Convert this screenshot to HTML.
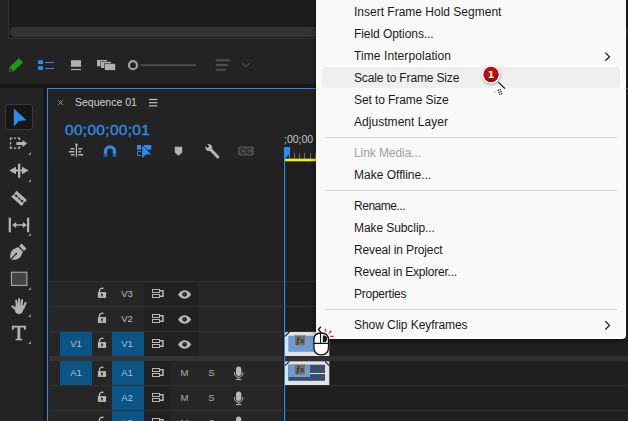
<!DOCTYPE html>
<html><head><meta charset="utf-8">
<style>
*{margin:0;padding:0;box-sizing:border-box}
html,body{width:628px;height:421px;overflow:hidden;background:#232323}
body{position:relative;font-family:"Liberation Sans",sans-serif;color:#bdbdbd}
.a{position:absolute}
.mi{position:absolute;left:354px;font-size:12px;color:#1b1b1b;white-space:nowrap;line-height:14px}
.sep{position:absolute;left:325px;width:292px;height:1px;background:#d4d4d4}
.tl{position:absolute;font-size:9.500px;color:#b8bec6;line-height:12px;text-align:center}
.row{position:absolute;left:48px;width:235px;height:24px;background:#262626}
.dk{position:absolute;left:96px;width:54px;top:0;height:24px;background:#212121}
</style></head><body>

<!-- top project panel -->
<div class="a" style="left:0;top:0;width:628px;height:84px;background:#232323"></div>
<div class="a" style="left:8px;top:-2px;width:640px;height:41px;background:#1d1d1d;border:1px solid #323232"></div>
<div class="a" style="left:10px;top:27px;width:640px;height:10px;background:#333;border-radius:5px 0 0 5px"></div>
<!-- gap band -->
<div class="a" style="left:0;top:84px;width:628px;height:4px;background:#161616"></div>
<div class="a" style="left:43px;top:84px;width:5px;height:340px;background:#161616"></div>
<!-- tool panel -->
<div class="a" style="left:0;top:88px;width:43px;height:333px;background:#232323"></div>
<!-- timeline panel -->
<div class="a" id="tlp" style="left:47px;top:88px;width:600px;height:340px;background:#232323;border:1.5px solid #2d8ceb"></div>
<div class="a" style="left:49px;top:161px;width:236px;height:121px;background:#212121"></div>
<div class="a" style="left:285px;top:161px;width:343px;height:260px;background:#1f1f1f"></div>


<!-- track rows -->
<div class="a" style="left:49px;top:281px;width:579px;height:1px;background:#303030"></div>
<div class="row" style="top:282px"><div class="dk"></div></div>
<div class="a" style="left:49px;top:306px;width:579px;height:1px;background:#303030"></div>
<div class="row" style="top:307px"><div class="dk"></div></div>
<div class="a" style="left:49px;top:331px;width:579px;height:1px;background:#303030"></div>
<div class="row" style="top:332px"><div class="dk"></div></div>
<div class="a" style="left:49px;top:356px;width:579px;height:5px;background:#303030"></div><div class="a" style="left:48.500px;top:356px;width:234.500px;height:5px;background:#333"></div>
<div class="row" style="top:361px"><div class="dk" style="width:27px"></div></div>
<div class="a" style="left:49px;top:385px;width:579px;height:1px;background:#303030"></div>
<div class="row" style="top:386px"><div class="dk" style="width:27px"></div></div>
<div class="a" style="left:49px;top:410px;width:579px;height:1px;background:#303030"></div>
<div class="row" style="top:411px"><div class="dk" style="width:27px"></div></div>
<!-- blue patches -->
<div class="a" style="left:60px;top:332px;width:32px;height:24px;background:#0b5586"></div>
<div class="a" style="left:112px;top:332px;width:32px;height:24px;background:#0b5586"></div>
<div class="a" style="left:60px;top:361px;width:32px;height:24px;background:#0b5586"></div>
<div class="a" style="left:112px;top:361px;width:32px;height:24px;background:#0b5586"></div>
<div class="a" style="left:112px;top:386px;width:32px;height:24px;background:#0b5586"></div>
<div class="a" style="left:112px;top:411px;width:32px;height:24px;background:#0b5586"></div>
<!-- track labels -->
<div class="tl" style="left:111px;top:288px;width:32px">V3</div>
<div class="tl" style="left:111px;top:313px;width:32px">V2</div>
<div class="tl" style="left:111px;top:338px;width:32px">V1</div>
<div class="tl" style="left:60px;top:338px;width:32px">V1</div>
<div class="tl" style="left:60px;top:367px;width:32px">A1</div>
<div class="tl" style="left:111px;top:367px;width:32px">A1</div>
<div class="tl" style="left:111px;top:392px;width:32px">A2</div>
<div class="tl" style="left:111px;top:417px;width:32px">A3</div>
<div class="tl" style="left:173.5px;top:367px;width:22px;font-size:9.500px;color:#b0b0b0">M</div>
<div class="tl" style="left:200.5px;top:367px;width:22px;font-size:9.500px;color:#b0b0b0">S</div>
<div class="tl" style="left:173.5px;top:392px;width:22px;font-size:9.500px;color:#b0b0b0">M</div>
<div class="tl" style="left:200.5px;top:392px;width:22px;font-size:9.500px;color:#b0b0b0">S</div>
<div class="tl" style="left:173.5px;top:417px;width:22px;font-size:9.500px;color:#b0b0b0">M</div>
<div class="tl" style="left:200.5px;top:417px;width:22px;font-size:9.500px;color:#b0b0b0">S</div>
<!-- header text -->
<div class="a" style="left:75px;top:96px;font-size:10.500px;line-height:13px;color:#d2d2d2;white-space:nowrap">Sequence 01</div>
<div class="a" style="left:65px;top:120.500px;font-size:15.500px;line-height:18px;color:#2d8ceb;white-space:nowrap;letter-spacing:.3px;-webkit-text-stroke:.35px #2d8ceb">00;00;00;01</div>
<div class="a" style="left:284px;top:133px;font-size:10.500px;line-height:13px;color:#c8c8c8;white-space:nowrap">;00;00</div>
<div class="a" style="left:9px;top:321.500px;width:20px;font-family:'DejaVu Serif','Liberation Serif',serif;font-size:18.500px;line-height:24px;color:#b4b4b4;text-align:center;transform:scaleX(1.12);-webkit-text-stroke:.6px #b4b4b4">T</div>

<svg class="a" id="ui" style="left:0;top:0" width="628" height="421" viewBox="0 0 628 421">
<defs>
<g id="lock" fill="#b8b8b8"><path d="M0 4.1h8.2v5.8H0z"/><path d="M1.6 4.3V2.6C1.6 1 3 0 5.6.3" fill="none" stroke="#b8b8b8" stroke-width="1.3"/><circle cx="4.1" cy="6.5" r="1" fill="#262626"/><rect x="3.6" y="6.5" width="1" height="2.2" fill="#262626"/></g>
<g id="sync" fill="none" stroke="#b8b8b8"><rect x=".5" y=".5" width="7" height="3"/><rect x=".5" y="5.500" width="7" height="3"/><path d="M8 1.700h3v5.600H8" stroke-width="1.500"/></g>
<g id="eye"><path d="M0 4.3C2 1.2 4.3 0 6.6 0s4.6 1.2 6.6 4.3C11.200 7.400 8.900 8.600 6.600 8.600S2 7.400 0 4.300z" fill="#b8b8b8"/><circle cx="6.600" cy="4.100" r="2.400" fill="#262626"/><circle cx="6" cy="3.400" r=".7" fill="#777"/></g>
<g id="mic"><rect x="2" y="0" width="5.300" height="9.400" rx="2.650" fill="#b8b8b8"/><path d="M.5 5.500v1.200a4.150 4.150 0 0 0 8.300 0V5.500M4.650 11v1.800M1.800 13.100h5.700" fill="none" stroke="#b8b8b8" stroke-width="1"/></g>
<path id="tri" d="M3 0v3H0z" fill="#8c8c8c"/>
</defs>

<!-- top icons -->
<g transform="translate(8.700 71.800) rotate(-42.700)"><path d="M0 0l4.200-2.950h12.600v5.900H4.200z" fill="#1a9c1a"/><path d="M1.100 0l2.700-1.600v3.200z" fill="#232323"/></g>
<g fill="#2d8ceb"><rect x="38" y="60.300" width="5" height="3.700"/><rect x="38" y="66.200" width="5" height="3.700"/><rect x="45" y="62" width="9" height="1"/><rect x="45" y="68" width="9" height="1"/></g>
<g fill="#b0b0b0"><rect x="71" y="60.200" width="10" height="6.600"/><rect x="71" y="68.900" width="10" height="1.200"/>
<rect x="97" y="60" width="10" height="6.300"/><rect x="100.500" y="61.300" width="11" height="7.200" fill="#232323"/><rect x="101" y="61.800" width="10" height="6.200"/><rect x="104.300" y="63.300" width="11.400" height="7.300" fill="#232323"/><rect x="104.800" y="63.800" width="10.400" height="6.300"/></g>
<rect x="140.500" y="64.300" width="55.500" height="1.600" fill="#555"/>
<circle cx="133" cy="65.200" r="4" fill="#232323" stroke="#a0a0a0" stroke-width="2.200"/>
<g fill="#4e4e4e"><rect x="215.800" y="59.200" width="14.200" height="2"/><rect x="215.800" y="64" width="12" height="2"/><rect x="215.800" y="68.800" width="10" height="2"/></g>
<path d="M242.200 63.300l3.600 3.300 3.600-3.300" fill="none" stroke="#484848" stroke-width="1.200"/>

<!-- tools -->
<rect x="5.500" y="104.500" width="27" height="25" rx="2.500" fill="#161616" stroke="#3a3a3a"/>
<path d="M13.800 108.600v17.800l5-5.500 7.700-.6z" fill="#2d8ceb"/>
<g><rect x="10.500" y="138.200" width="9" height="10" fill="none" stroke="#b4b4b4" stroke-width="1.300" stroke-dasharray="2 1.500 2 1.500 4 1.750 2.500 1.750 4 1.500 2 1.500 4 1.750 2.500 1.750 2"/><path d="M16.400 142.100h6.100v-2.100l4.700 3.550-4.700 3.550v-2.100h-6.100z" fill="#b4b4b4" stroke="#232323" stroke-width="1" paint-order="stroke"/></g>
<use href="#tri" x="28" y="152"/>
<g fill="#b4b4b4"><rect x="18" y="163.700" width="2.300" height="14.100"/><path d="M9.200 170.500l6.800-3.700v2.700h2v2h-2v2.700zM28.800 170.500l-6.800-3.700v2.700h-1.700v2H22v2.700z"/></g>
<use href="#tri" x="28" y="179"/>
<g transform="translate(19.100 198.400) rotate(42)"><path d="M-7-4h14v2.600l-.6.600v1.600l.6.600V4H-7V1.400l.6-.6V-.8l-.6-.6z" fill="#b4b4b4"/><path d="M-5.200-1h2l.9.700h4.600l.9-.7h2v2h-2l-.9-.7h-4.600l-.9.700h-2z" fill="#232323"/><circle cx="0" cy="0" r=".85" fill="#232323"/></g>
<g fill="#b4b4b4"><rect x="8.700" y="217.700" width="2.200" height="14.500"/><rect x="27" y="217.700" width="2.200" height="14.500"/><path d="M12 225l4.200-3.100v2.400h6.600v-2.400L27 225l-4.200 3.100v-2.400h-6.600v2.400z"/></g>
<use href="#tri" x="28" y="233"/>
<g transform="translate(10.700 259.300) rotate(-45)"><path d="M0 0C1.200-2.800 4.500-5.300 8.500-5.300L14-3.400v6.800L8.500 5.300C4.500 5.300 1.200 2.800 0 0z" fill="#b4b4b4"/><path d="M0 0h7.500" stroke="#232323" stroke-width="1.100"/><circle cx="8" cy="0" r=".9" fill="#232323"/><rect x="15.400" y="-3.500" width="3.400" height="7" fill="#b4b4b4"/></g>
<rect x="11.400" y="272.200" width="15.500" height="13.200" fill="#444" stroke="#b4b4b4"/>
<use href="#tri" x="28" y="287"/>
<g fill="none" stroke="#b4b4b4" stroke-width="2.100" stroke-linecap="round"><path d="M16.200 300.800l1 6M19.100 299.200v7M22.100 300.400l-.8 6M25.500 303l-2.300 5.500M12.300 306.300l4 3.800"/></g>
<path d="M15.200 305.500h8.500l-.6 5c-.5 2.400-2 3.500-4 3.500-1.800 0-3-.8-4-2.600z" fill="#b4b4b4"/>
<use href="#tri" x="28" y="314"/>
<use href="#tri" x="28" y="341"/>

<!-- panel tab -->
<path d="M58.300 100.300l4.600 4.600M62.900 100.300l-4.600 4.600" stroke="#9a9a9a" stroke-width="1"/>
<g fill="#c6c6c6"><rect x="149" y="98.900" width="8.300" height="1.150"/><rect x="149" y="102.100" width="8.300" height="1.150"/><rect x="149" y="105.300" width="8.300" height="1.150"/></g>

<!-- header buttons -->
<g fill="#b4b4b4"><rect x="75.800" y="145" width="1.300" height="11.800"/><rect x="75.200" y="143.600" width="2.500" height="2"/>
<rect x="70.500" y="148" width="4" height="1.500"/><rect x="78.400" y="148" width="4" height="1.500"/>
<rect x="68.800" y="151" width="5.700" height="1.500"/><rect x="78.400" y="151" width="2.600" height="1.500"/>
<rect x="70.800" y="154" width="3.700" height="1.500"/><rect x="78.400" y="154" width="4.800" height="1.500"/></g>
<path d="M105.500 156.800v-5.500a4.500 4.500 0 0 1 9 0v5.500" fill="none" stroke="#2d8ceb" stroke-width="3.300"/>
<rect x="103.800" y="153.600" width="3.400" height="3.200" fill="#1d5f9f"/><rect x="112.800" y="153.600" width="3.400" height="3.200" fill="#1d5f9f"/>
<g fill="#2d8ceb"><rect x="137" y="145" width="4" height="4.700"/><path d="M141 151.500h-3.500v4h3.500" fill="none" stroke="#2d8ceb" stroke-width="1"/><rect x="143.800" y="145" width="7.400" height="4.700"/>
<path d="M142.100 145.600v12.700l3.700-3.900 5.300-.2z" stroke="#232323" stroke-width="1.200" paint-order="stroke"/></g>
<path d="M174.800 146.800h7.400v5.600l-3.700 3.400-3.700-3.400z" fill="#b4b4b4"/>
<g transform="translate(208.800 147.600) rotate(46)"><path d="M0 0h13" stroke="#b4b4b4" stroke-width="3" stroke-linecap="round"/><circle cx="0" cy="0" r="3.300" fill="#b4b4b4"/><path d="M-4.500-1.200h3.800v2.400h-3.800z" fill="#232323"/></g>
<rect x="238" y="146.300" width="16" height="9.400" rx="1.800" fill="#4a4a4a"/>

<!-- ruler -->
<g fill="#6a6a6a"><rect x="289" y="153" width="1" height="6"/><rect x="294" y="153" width="1" height="6"/><rect x="299" y="153" width="1" height="6"/><rect x="304" y="153" width="1" height="6"/><rect x="310" y="153" width="1" height="6"/><rect x="315" y="153" width="1" height="6"/></g>
<rect x="285" y="158.700" width="32" height="2.600" fill="#f5f500"/>
<path d="M283.900 147h6.200v6.500l-5 5h-1.200z" fill="#2d8ceb"/>
<rect x="283" y="161" width="1" height="270" fill="#1b1b1b"/><rect x="284" y="156" width="1.150" height="270" fill="#2d8ceb"/>

<!-- track icons -->
<use href="#lock" x="97.900" y="288"/><use href="#lock" x="97.900" y="313"/><use href="#lock" x="97.900" y="338"/><use href="#lock" x="97.900" y="367"/><use href="#lock" x="97.900" y="392"/><use href="#lock" x="97.900" y="417"/>
<use href="#sync" x="152" y="289"/><use href="#sync" x="152" y="314"/><use href="#sync" x="152" y="339"/><use href="#sync" x="152" y="368"/><use href="#sync" x="152" y="393"/><use href="#sync" x="152" y="418"/>
<use href="#eye" x="178" y="290.200"/><use href="#eye" x="178" y="315.200"/><use href="#eye" x="178" y="340.200"/>
<use href="#mic" x="234" y="366.500"/><use href="#mic" x="234" y="391.500"/><use href="#mic" x="234" y="416.500"/>

<!-- clips -->
<g id="vclip"><rect x="285" y="332" width="44.300" height="24" fill="#e2e2e2"/><rect x="288.300" y="335.800" width="38" height="16" fill="#6b9bd6"/><path d="M285 336.300l4.300-4.300M329.300 336.300l-4.300-4.300" stroke="#1a1a1a" stroke-width="1.100" fill="none"/><path d="M285 332h1.800l-1.800 1.800zM329.300 332h-1.800l1.800 1.800z" fill="#9a9a9a"/><rect x="294.500" y="335.300" width="11" height="10.500" fill="#707070" stroke="#9c9c9c" stroke-width=".9"/></g>
<g id="aclip"><rect x="285" y="361.300" width="44.300" height="23.700" fill="#e2e2e2"/><rect x="288.300" y="364.700" width="36.700" height="16.100" fill="#38506f"/><rect x="288.300" y="364.700" width="21.700" height="12.300" fill="#6b9bd6"/><rect x="310" y="373" width="15" height="1" fill="#dfe3ea"/><path d="M285 365.600l4.300-4.300M329.300 365.600l-4.300-4.300" stroke="#1a1a1a" stroke-width="1.100" fill="none"/><path d="M285 361.300h1.800l-1.800 1.800zM329.300 361.300h-1.800l1.800 1.800z" fill="#9a9a9a"/><rect x="294.500" y="364.500" width="11" height="10.500" fill="#707070" stroke="#9c9c9c" stroke-width=".9"/></g>
<text x="296.600" y="343" font-family="Liberation Serif,serif" font-style="italic" font-weight="bold" font-size="8.500" letter-spacing=".6" fill="#2c2c2c">fx</text>
<text x="296.600" y="372.200" font-family="Liberation Serif,serif" font-style="italic" font-weight="bold" font-size="8.500" letter-spacing=".6" fill="#2c2c2c">fx</text>
<text x="239.600" y="154.200" font-family="Liberation Sans,sans-serif" font-weight="bold" font-size="8.500" fill="#232323" letter-spacing="-.3">CC</text>
</svg>
<!-- menu -->
<div class="a" id="menu" style="left:316px;top:-10px;width:310px;height:349px;background:#f9f9f9;border-radius:0 0 4px 4px;box-shadow:0 2px 6px rgba(0,0,0,.5)"></div>
<div class="a" style="left:322px;top:67px;width:298px;height:21px;background:#efefef;border-radius:4px"></div>
<div class="mi" style="top:5px;letter-spacing:-0.000px">Insert Frame Hold Segment</div>
<div class="mi" style="top:27px;letter-spacing:-0.067px">Field Options...</div>
<div class="mi" style="top:49px;letter-spacing:0.082px">Time Interpolation</div>
<div class="mi" style="top:71px;letter-spacing:-0.147px">Scale to Frame Size</div>
<div class="mi" style="top:93px;letter-spacing:-0.084px">Set to Frame Size</div>
<div class="mi" style="top:115px;letter-spacing:0.041px">Adjustment Layer</div>
<div class="sep" style="top:137px"></div>
<div class="mi" style="top:146px;letter-spacing:-0.079px;color:#a0a0a0">Link Media...</div>
<div class="mi" style="top:168px;letter-spacing:0.003px">Make Offline...</div>
<div class="sep" style="top:190px"></div>
<div class="mi" style="top:199px;letter-spacing:-0.482px">Rename...</div>
<div class="mi" style="top:221px;letter-spacing:-0.082px">Make Subclip...</div>
<div class="mi" style="top:243px;letter-spacing:-0.132px">Reveal in Project</div>
<div class="mi" style="top:265px;letter-spacing:-0.210px">Reveal in Explorer...</div>
<div class="mi" style="top:287px;letter-spacing:-0.245px">Properties</div>
<div class="sep" style="top:309px"></div>
<div class="mi" style="top:318px;letter-spacing:-0.062px">Show Clip Keyframes</div>


<svg class="a" id="ov" style="left:0;top:0" width="628" height="421" viewBox="0 0 628 421">
<defs><radialGradient id="rg" cx=".45" cy=".35" r=".75"><stop offset="0" stop-color="#c41414"/><stop offset=".6" stop-color="#b00c0c"/><stop offset="1" stop-color="#7c0606"/></radialGradient>
<filter id="bs" x="-30%" y="-30%" width="170%" height="170%"><feGaussianBlur stdDeviation="1.1"/></filter></defs>
<path d="M605.300 52.600l4.200 4.100-4.200 4.100M605.300 321.300l4.200 4.100-4.200 4.100" fill="none" stroke="#222" stroke-width="1.300"/>
<!-- cursor tail -->
<path d="M498.400 82.100l6.600 6.500" stroke="#000" stroke-width="1.050"/>
<path d="M493.100 93.300l3.400-3" stroke="#c8c8c8" stroke-width="1"/>
<path d="M498 89.800l2.300 5.800M500 89.300l2.300 5.800" stroke="#000" stroke-width="1.300" stroke-dasharray="1.100 1"/>
<!-- badge -->
<circle cx="491.300" cy="75.300" r="9.300" fill="#000" opacity=".35" filter="url(#bs)"/>
<circle cx="491.050" cy="74.500" r="9.200" fill="#fff"/>
<circle cx="491.050" cy="74.500" r="7.700" fill="url(#rg)"/>
<text x="491.050" y="77.900" text-anchor="middle" font-family="DejaVu Sans,sans-serif" font-weight="bold" font-size="9.500" fill="#fff">1</text>
<!-- mouse -->
<path d="M320.900 326.600l-2.400 2.900 2.700 3.300" fill="none" stroke="#111" stroke-width="1.300"/>
<path d="M313.900 343.400V340c0-4.800 3.100-7 7.300-7s7.300 2.200 7.300 7v7.500c0 4.900-3.100 7.300-7.300 7.300s-7.300-2.400-7.300-7.300z" fill="#fff" stroke="#111" stroke-width="1.300"/>
<path d="M313.900 343.400h14.600M320.500 333v10.400" stroke="#111" stroke-width="1.100"/>
<path d="M322.800 335.400h1.400c2 0 2.900 1.500 2.900 3.400s-.9 3.400-2.900 3.400h-1.400z" fill="#1a1a1a"/>
<path d="M325.300 328.800l.7 2.900M331.400 330.700l-2.400 2.700M330.200 336.400h3.600" stroke="#ff1818" stroke-width="1.300"/>
</svg>
</body></html>
